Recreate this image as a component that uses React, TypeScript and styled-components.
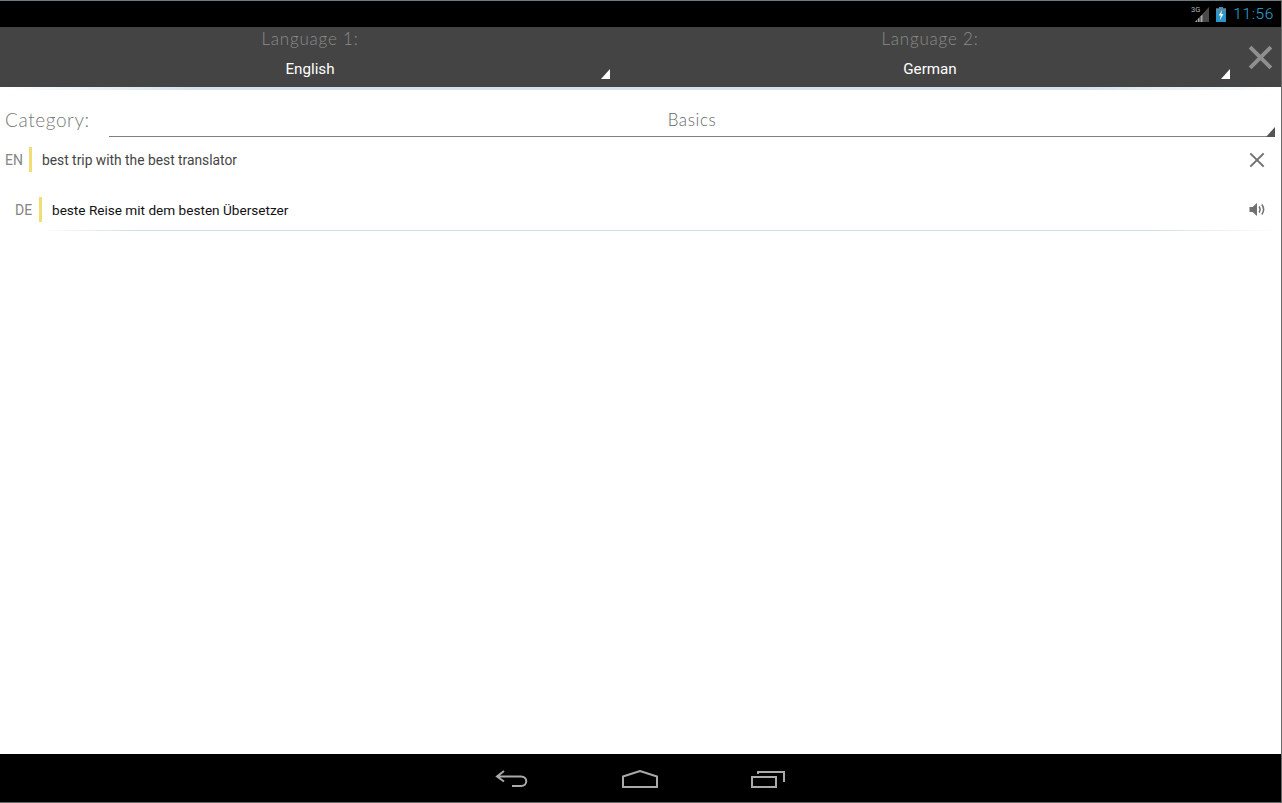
import styled, { createGlobalStyle } from 'styled-components'

const GlobalStyle = createGlobalStyle`
  html, body {
    margin: 0;
    padding: 0;
    background: #fff;
  }
`;

const Screen = styled.div`
  box-sizing: border-box;
  width: 1282px;
  height: 803px;
  display: flex;
  flex-direction: column;
  overflow: hidden;
  background: #fff;
  border-top: 1px solid #6f7a80;
  border-right: 1px solid #6a6a6a;
  border-bottom: 1px solid #6a6a6a;
  font-family: Roboto, "Liberation Sans", sans-serif;
`;

const StatusBar = styled.div`
  height: 26px;
  flex: none;
  background: #000;
  display: flex;
  align-items: center;
  justify-content: flex-end;
  padding-right: 7px;
`;

const Clock = styled.span`
  font-size: 15.5px;
  letter-spacing: 0.6px;
  color: #2fa9dc;
  margin-left: 7px;
  font-weight: 300;
`;

const SignalWrap = styled.div`
  display: flex;
  margin-right: 6px;
`;

const Header = styled.div`
  height: 60px;
  flex: none;
  display: flex;
  background: #444;
`;

const Selector = styled.div`
  position: relative;
  width: 620px;
  flex: none;
  display: flex;
  flex-direction: column;
  align-items: center;
  padding-top: 1px;
  box-sizing: border-box;
`;

const SelectorLabel = styled.div`
  height: 22px;
  line-height: 22px;
  font-family: Lato, sans-serif;
  font-weight: 300;
  font-size: 17px;
  letter-spacing: 0.8px;
  color: #8b8b8b;
`;

const SelectorValue = styled.div`
  margin-top: 8px;
  height: 22px;
  line-height: 22px;
  font-size: 15.2px;
  color: #fff;
`;

const Corner = styled.div<{ $color: string; $right: number; $bottom: number }>`
  position: absolute;
  right: ${(p) => p.$right}px;
  bottom: ${(p) => p.$bottom}px;
  width: 0;
  height: 0;
  border-style: solid;
  border-width: 0 0 10px 9px;
  border-color: transparent transparent ${(p) => p.$color} transparent;
`;

const CloseButton = styled.div`
  flex: 1;
  display: flex;
  align-items: center;
  justify-content: center;
  padding-top: 1px;
  color: #8f8f8f;
`;

const Fade = styled.div`
  height: 3px;
  flex: none;
  background: linear-gradient(90deg, #fff 0%, #d5e3ec 15%, #d5e3ec 85%, #fff 100%);
`;

const CategoryRow = styled.div`
  height: 47px;
  flex: none;
  display: flex;
  align-items: stretch;
  padding: 0 6px 0 5px;
`;

const CategoryLabel = styled.div`
  width: 104px;
  flex: none;
  padding-top: 18px;
  line-height: 24px;
  font-family: Lato, sans-serif;
  font-weight: 300;
  font-size: 19px;
  letter-spacing: 0.6px;
  color: #777;
`;

const CategorySpinner = styled.div`
  position: relative;
  flex: 1;
  border-bottom: 1px solid #808080;
  text-align: center;
  padding-top: 18px;
  line-height: 24px;
  font-family: Lato, sans-serif;
  font-weight: 300;
  font-size: 17px;
  letter-spacing: 0.6px;
  color: #666;
`;

const Phrases = styled.div`
  padding-top: 10px;
  display: flex;
  flex-direction: column;
  gap: 25px;
`;

const PhraseRow = styled.div<{ $indent: number }>`
  height: 25px;
  display: flex;
  align-items: center;
  padding-left: ${(p) => p.$indent}px;
  padding-right: 16px;
`;

const LangCode = styled.div`
  width: 24px;
  flex: none;
  font-size: 14px;
  color: #858585;
`;

const Accent = styled.div`
  width: 3px;
  height: 25px;
  flex: none;
  background: #f3dc74;
`;

const PhraseText = styled.div<{ $color: string; $size: number }>`
  flex: 1;
  padding-left: 10px;
  font-size: ${(p) => p.$size}px;
  color: ${(p) => p.$color};
`;

const RowIcon = styled.div`
  display: flex;
  color: #707070;
`;

const Divider = styled.div`
  height: 1px;
  margin: 8px 5px 0 39px;
  background: linear-gradient(90deg, #fff 0%, #cfdfe6 8%, #cfdfe6 90%, #fff 100%);
`;

const Content = styled.div`
  flex: 1;
`;

const NavBar = styled.div`
  height: 48px;
  flex: none;
  background: #000;
  display: flex;
  align-items: center;
  justify-content: center;
  gap: 93px;
  padding: 2px 2px 0 0;
  box-sizing: border-box;
`;

function SignalIcon() {
  return (
    <svg width="19" height="18" viewBox="0 0 19 18">
      <text x="0" y="7" fontSize="7.5" fontFamily="Roboto, sans-serif" fill="#b8b8b8">3G</text>
      <path d="M18 2v15h-14z" fill="#4a4a4a" />
      <path d="M11.500 9.500v7.500h-7.500z" fill="#a8a8a8" />
      <path d="M6.500 17v-2.500M9 17v-5" stroke="#000" strokeWidth="0.700" />
    </svg>
  )
}

function BatteryIcon() {
  return (
    <svg width="10" height="15" viewBox="0 0 10 15">
      <path d="M3 0h4v1.500h3v13.500h-10v-13.500h3z" fill="#2a95c6" />
      <path d="M0 1.500h10v2.500h-10z" fill="#6d8894" />
      <path d="M6.200 3l-3.500 5.500h2.200l-1.200 5 3.800-6.500h-2.300z" fill="#fff" />
    </svg>
  )
}

function CrossIcon({ size, weight }: { size: number; weight: number }) {
  return (
    <svg width={size} height={size} viewBox="0 0 24 24">
      <path d="M2 2L22 22M22 2L2 22" stroke="currentColor" strokeWidth={weight} fill="none" />
    </svg>
  )
}

function SpeakerIcon() {
  return (
    <svg width="16" height="13" viewBox="0 0 16 13">
      <path d="M0.500 4h3l4.500-4v13l-4.500-4h-3z" fill="#707070" />
      <path d="M10 3.500c1.300 1.800 1.300 4.200 0 6M12.800 1.500c2.200 3 2.200 7 0 10" stroke="#707070" strokeWidth="1.500" fill="none" />
    </svg>
  )
}

const phrases = [
  { code: 'EN', text: 'best trip with the best translator', indent: 5, color: '#444', size: 13.8 },
  { code: 'DE', text: 'beste Reise mit dem besten Übersetzer', indent: 15, color: '#111', size: 13.6 },
]

function App() {
  return (
    <>
      <GlobalStyle />
      <Screen>
        <StatusBar>
          <SignalWrap>
            <SignalIcon />
          </SignalWrap>
          <BatteryIcon />
          <Clock>11:56</Clock>
        </StatusBar>
        <Header>
          <Selector>
            <SelectorLabel>Language 1:</SelectorLabel>
            <SelectorValue>English</SelectorValue>
            <Corner $color="#fff" $right={10} $bottom={8} />
          </Selector>
          <Selector>
            <SelectorLabel>Language 2:</SelectorLabel>
            <SelectorValue>German</SelectorValue>
            <Corner $color="#fff" $right={10} $bottom={8} />
          </Selector>
          <CloseButton>
            <CrossIcon size={25} weight={3.8} />
          </CloseButton>
        </Header>
        <Fade />
        <CategoryRow>
          <CategoryLabel>Category:</CategoryLabel>
          <CategorySpinner>
            Basics
            <Corner $color="#555" $right={0} $bottom={-1} />
          </CategorySpinner>
        </CategoryRow>
        <Phrases>
          {phrases.map((p) => (
            <PhraseRow key={p.code} $indent={p.indent}>
              <LangCode>{p.code}</LangCode>
              <Accent />
              <PhraseText $color={p.color} $size={p.size}>{p.text}</PhraseText>
              <RowIcon>
                {p.code === 'EN' ? <CrossIcon size={16} weight={3} /> : <SpeakerIcon />}
              </RowIcon>
            </PhraseRow>
          ))}
        </Phrases>
        <Divider />
        <Content />
        <NavBar>
          <svg width="34" height="20" viewBox="0 0 34 20" fill="none" stroke="#aaa" strokeWidth="2">
            <path d="M9 2L2 7.500l7 5M2 7.500h24c7 0 7 9.500 0 9.500h-9" />
          </svg>
          <svg width="36" height="18" viewBox="0 0 36 18" fill="none" stroke="#aaa" strokeWidth="2">
            <path d="M1 6.500L18 1l17 5.500V17H1z" />
          </svg>
          <svg width="34" height="18" viewBox="0 0 34 18" fill="none" stroke="#aaa" strokeWidth="2">
            <path d="M1 7h24v10H1zM7 4V2h26v10" />
          </svg>
        </NavBar>
      </Screen>
    </>
  )
}

export default App
